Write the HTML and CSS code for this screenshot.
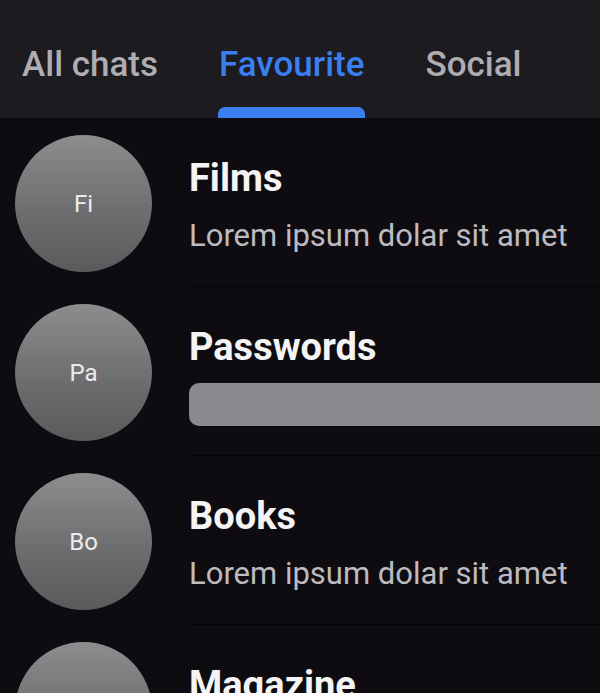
FILE: index.html
```html
<!DOCTYPE html>
<html>
<head>
<meta charset="utf-8">
<link rel="stylesheet" href="styles.css">
</head>
<body>
<div class="app">
  <nav class="tabs">
    <div class="tab">All chats</div>
    <div class="tab active">Favourite<span class="indicator"></span></div>
    <div class="tab">Social</div>
  </nav>
  <div class="list">
    <div class="row">
      <div class="avatar">Fi</div>
      <div class="info">
        <div class="title">Films</div>
        <div class="subtitle">Lorem ipsum dolar sit amet</div>
      </div>
    </div>
    <div class="row">
      <div class="avatar">Pa</div>
      <div class="info">
        <div class="title">Passwords</div>
        <div class="skeleton"></div>
      </div>
    </div>
    <div class="row">
      <div class="avatar">Bo</div>
      <div class="info">
        <div class="title">Books</div>
        <div class="subtitle">Lorem ipsum dolar sit amet</div>
      </div>
    </div>
    <div class="row">
      <div class="avatar">Ma</div>
      <div class="info">
        <div class="title">Magazine</div>
        <div class="subtitle">Lorem ipsum dolar sit amet</div>
      </div>
    </div>
  </div>
</div>
</body>
</html>
```
FILE: styles.css
```css
html, body {
  margin: 0;
  padding: 0;
  background: #0e0c10;
  font-family: Roboto, "Liberation Sans", sans-serif;
  overflow: hidden;
}
.app {
  width: 600px;
  height: 693px;
  overflow: hidden;
}
.tabs {
  height: 118px;
  background: #1c1b1f;
  display: flex;
  align-items: flex-start;
  gap: 61px;
  padding-left: 22px;
  box-sizing: border-box;
}
.tab {
  position: relative;
  height: 118px;
  padding-top: 45px;
  box-sizing: border-box;
  font-size: 35px;
  font-weight: 500;
  line-height: 40px;
  color: #afadb2;
  white-space: nowrap;
}
.tab.active {
  color: #3b7ef0;
}
.indicator {
  position: absolute;
  left: -1px;
  right: -1px;
  bottom: 0;
  height: 11px;
  background: #3b7ef0;
  border-radius: 7px 7px 0 0;
}
.list {
  display: flex;
  flex-direction: column;
}
.row {
  display: flex;
  height: 169px;
  flex-shrink: 0;
}
.avatar {
  width: 137px;
  height: 137px;
  margin: 17px 37px 0 15px;
  border-radius: 50%;
  flex-shrink: 0;
  background: linear-gradient(180deg, #8d8d8f 0%, #6e6e70 55%, #5a5a5c 100%);
  color: #ececee;
  font-size: 24px;
  display: flex;
  align-items: center;
  justify-content: center;
}
.info {
  flex: 1;
  border-bottom: 1px solid #050407;
  padding-top: 38px;
  min-width: 0;
}
.title {
  font-size: 38px;
  font-weight: 700;
  line-height: 44px;
  color: #f4f4f5;
  white-space: nowrap;
}
.subtitle {
  margin-top: 18px;
  font-size: 31px;
  line-height: 36px;
  color: #bdbbc0;
  white-space: nowrap;
}
.skeleton {
  margin-top: 14px;
  height: 43px;
  width: 440px;
  border-radius: 10px;
  background: #8b898d;
}
```
